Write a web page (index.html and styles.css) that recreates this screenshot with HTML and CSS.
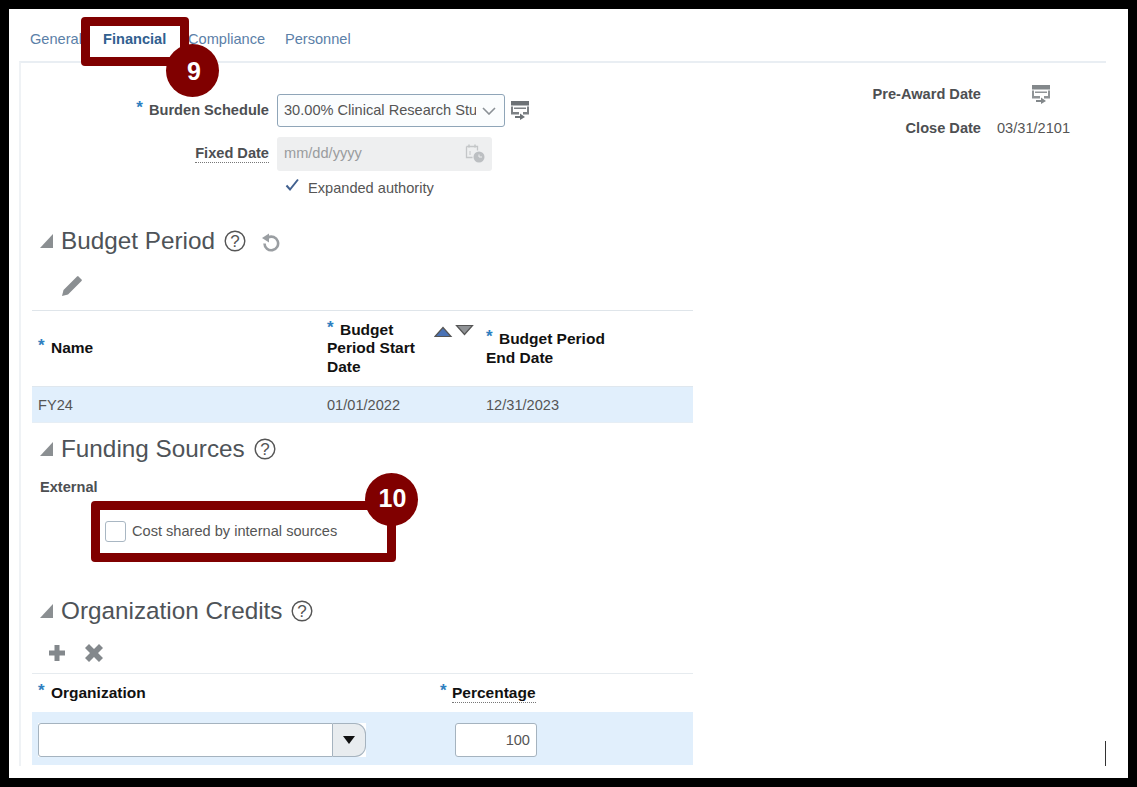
FILE: index.html
```html
<!DOCTYPE html>
<html lang="en">
<head>
<meta charset="utf-8">
<title>Award Financial</title>
<link rel="stylesheet" href="styles.css">
</head>
<body>
<main class="sheet">
  <nav class="tabs">
    <span class="tab tab-general">General</span>
    <span class="tab tab-active">Financial</span>
    <span class="tab tab-compliance">Compliance</span>
    <span class="tab">Personnel</span>
  </nav>
  <div class="panel">
    <div class="top-area">
      <div class="form">
        <div class="form-row row-burden">
          <label class="form-label"><span class="req">*</span> Burden Schedule</label>
          <div class="select"><span class="select-text">30.00% Clinical Research Stu</span>
            <svg class="chev" width="14" height="8" viewBox="0 0 14 8"><path d="M1 1l6 6 6-6" fill="none" stroke="#8b9196" stroke-width="1.6"/></svg>
          </div>
          <svg class="feedback" width="18" height="19" viewBox="0 0 18 19"><path d="M0 0h18v4.500H0z" fill="#6d7276"/><path d="M0 5.500h2V11h6v2.500H0zM16 5.500h2v8h-6V11h4zM3 6.500h12V8H3z" fill="#7d8185"/><path d="M4 15h5v-2.500l5 3.500-5 3v-2H4z" fill="#6d7276"/></svg>
        </div>
        <div class="form-row row-fixed">
          <label class="form-label"><span class="dotted">Fixed Date</span></label>
          <div class="date-input"><span>mm/dd/yyyy</span>
            <svg width="22" height="22" viewBox="0 0 22 22"><path d="M2.500 4.500h11v4M2.500 4.500v11h6" fill="none" stroke="#c4c6c8" stroke-width="1.300"/><path d="M5 2.500v3M11 2.500v3" stroke="#c4c6c8" stroke-width="1.500"/><path d="M6 9v4" stroke="#c4c6c8"/><circle cx="15" cy="15" r="5.500" fill="#bcbfc2"/><path d="M15 12.500V15h3" fill="none" stroke="#eeeff0"/></svg>
          </div>
        </div>
        <div class="check-row">
          <svg class="check" width="15" height="14" viewBox="0 0 15 14"><path d="M1.500 7.500l3.500 4 8-10" fill="none" stroke="#41608f" stroke-width="2"/></svg>
          <span>Expanded authority</span>
        </div>
      </div>
      <dl class="dates">
        <div class="date-row"><dt>Pre-Award Date</dt><dd>
          <svg class="feedback" width="18" height="19" viewBox="0 0 18 19"><path d="M0 0h18v4.500H0z" fill="#83888b"/><path d="M0 5.500h2V11h6v2.500H0zM16 5.500h2v8h-6V11h4zM3 6.500h12V8H3z" fill="#909497"/><path d="M4 15h5v-2.500l5 3.500-5 3v-2H4z" fill="#83888b"/></svg>
        </dd></div>
        <div class="date-row"><dt>Close Date</dt><dd>03/31/2101</dd></div>
      </dl>
    </div>

    <section class="section">
      <header class="sec-head">
        <span class="tri"></span><h2>Budget Period</h2>
        <svg class="help" width="22" height="22" viewBox="0 0 22 22"><circle cx="11" cy="11" r="9.800" fill="none" stroke="#555" stroke-width="1.400"/><text x="11" y="17" text-anchor="middle" class="help-q">?</text></svg>
        <svg class="refresh" width="20" height="20" viewBox="0 0 20 20"><path d="M7 5.500A6.800 6.800 0 1 1 3.500 11.500" fill="none" stroke="#9a9ea2" stroke-width="2.600"/><path d="M1 6l7-4.500v9z" fill="#9a9ea2"/></svg>
      </header>
      <div class="toolbar tb-budget">
        <svg width="22" height="22" viewBox="0 0 22 22"><path d="M1 21l1.500-6L14.500 3l4.500 4.500-12 12zM16 1.500l1-.5 4 4-.5 1-1.500 1.500L14.500 3z" fill="#8b8f92"/></svg>
      </div>
      <div class="grid grid-budget head-budget">
        <div class="th th-name th-name-budget"><span class="req">*</span> Name</div>
        <div class="th th-start"><span class="th-wrap"><span class="req">*</span> Budget<br>Period Start<br>Date</span>
          <svg class="sort" width="40" height="14" viewBox="0 0 40 14"><path d="M1 12.500L9 3.500l8 9z" fill="#4a72b5" stroke="#555" stroke-width="1.200"/><path d="M22.500 1.500h16l-8 9z" fill="#8f9295" stroke="#555" stroke-width="1.200"/></svg>
        </div>
        <div class="th th-end"><span class="req">*</span> Budget Period<br>End Date</div>
      </div>
      <div class="grid grid-budget row-budget">
        <div class="td td-name">FY24</div><div class="td">01/01/2022</div><div class="td">12/31/2023</div>
      </div>
    </section>

    <section class="section">
      <header class="sec-head head-funding">
        <span class="tri"></span><h2>Funding Sources</h2>
        <svg class="help" width="22" height="22" viewBox="0 0 22 22"><circle cx="11" cy="11" r="9.800" fill="none" stroke="#555" stroke-width="1.400"/><text x="11" y="17" text-anchor="middle" class="help-q">?</text></svg>
      </header>
      <div class="external">External</div>
      <div class="cost-row"><span class="box"></span><span>Cost shared by internal sources</span></div>
    </section>

    <section class="section">
      <header class="sec-head head-org">
        <span class="tri"></span><h2>Organization Credits</h2>
        <svg class="help" width="22" height="22" viewBox="0 0 22 22"><circle cx="11" cy="11" r="9.800" fill="none" stroke="#555" stroke-width="1.400"/><text x="11" y="17" text-anchor="middle" class="help-q">?</text></svg>
      </header>
      <div class="toolbar tb-org">
        <svg width="18" height="18" viewBox="0 0 18 18"><path d="M6.500 1h5v5.500H17v5h-5.500V17h-5v-5.500H1v-5h5.500z" fill="#83888c"/></svg>
        <svg width="20" height="20" viewBox="0 0 20 20"><path d="M5 1L10 6l5-5 4 4-5 5 5 5-4 4-5-5-5 5-4-4 5-5-5-5z" fill="#83888c"/></svg>
      </div>
      <div class="grid grid-org head-orgtable">
        <div class="th th-name"><span class="req">*</span> Organization</div>
        <div class="th"><span class="req req-tight">*</span> <span class="dotted">Percentage</span></div>
      </div>
      <div class="grid grid-org row-org">
        <div class="combo"><span class="combo-input"></span><span class="combo-btn"><svg width="12" height="8" viewBox="0 0 12 8"><path d="M0 0h12L6 8z" fill="#111"/></svg></span></div>
        <div class="num-wrap"><span class="num">100</span></div>
      </div>
    </section>
  </div>

  <span class="caret"></span>
  <div class="callout callout-9"></div>
  <div class="badge badge-9">9</div>
  <div class="callout callout-10"></div>
  <div class="badge badge-10">10</div>
</main>
</body>
</html>
```
FILE: styles.css
```css
* { box-sizing: border-box; }
html, body { margin: 0; padding: 0; }
body {
  width: 1137px;
  height: 787px;
  background: #000;
  padding: 9px;
  font-family: "Liberation Sans", Arial, sans-serif;
  font-size: 14.6px;
  color: #555;
  overflow: hidden;
}
.sheet {
  position: relative;
  width: 1119px;
  height: 769px;
  background: #fff;
}
.tabs {
  display: flex;
  align-items: center;
  height: 52px;
  padding: 8px 0 0 21px;
  color: #5b80a8;
}
.tab-general { width: 73px; }
.tab-active { width: 85px; font-weight: 700; color: #31608f; }
.tab-compliance { width: 97px; }
.panel {
  width: 1087px;
  height: 705px;
  margin-left: 10px;
  border-top: 2px solid #e9eef3;
  border-left: 2px solid #eff2f5;
  padding-left: 11px;
}
.top-area {
  display: flex;
  height: 162px;
  padding-top: 31px;
}
.form { width: 802px; flex: none; }
.form-row { display: flex; align-items: center; }
.row-burden { height: 33px; }
.row-fixed { height: 34px; margin-top: 10px; }
.form-label {
  flex: none;
  width: 237px;
  margin-right: 8px;
  padding-bottom: 2px;
  text-align: right;
  font-weight: 700;
  color: #4d4f52;
}
.dotted { border-bottom: 1px dotted #777; padding-bottom: 1px; }
.req {
  position: relative;
  top: -2px;
  margin-right: 2px;
  color: #2f7fc0;
  font-size: 17px;
  font-weight: 700;
  line-height: 0;
}
.req-tight { margin-right: 1px; }
.select {
  display: flex;
  align-items: center;
  flex: none;
  width: 228px;
  height: 33px;
  padding: 0 7px 2px 6px;
  border: 1px solid #8fa5b8;
  border-radius: 3px;
  background: #fbfdfe;
  color: #555;
}
.select-text { width: 192px; overflow: hidden; white-space: nowrap; }
.chev { flex: none; margin: 2px 0 0 6px; }
.feedback { flex: none; }
.row-burden .feedback { margin-left: 6px; }
.date-input {
  display: flex;
  align-items: center;
  justify-content: space-between;
  flex: none;
  width: 215px;
  height: 34px;
  padding: 0 6px 2px 7px;
  border-radius: 3px;
  background: #eeeff0;
  color: #9a9c9e;
}
.check-row {
  display: flex;
  align-items: center;
  gap: 8px;
  height: 22px;
  margin: 6px 0 0 253px;
}
.check { margin-top: -7px; }
.dates { margin: -17px 0 0; }
.date-row { display: flex; align-items: center; height: 34px; }
.date-row dt {
  width: 147px;
  text-align: right;
  font-weight: 700;
  color: #4d4f52;
}
.date-row dd { display: flex; margin: 0 0 0 16px; }
.date-row .feedback { margin-left: 35px; }
.sec-head { display: flex; align-items: center; height: 32px; margin-left: 8px; }
.sec-head h2 {
  margin: 0 9px 0 0;
  font-size: 24.3px;
  font-weight: 400;
  color: #4e5358;
}
.tri {
  width: 0;
  height: 0;
  margin-right: 8px;
  border-style: solid;
  border-width: 0 0 14px 13px;
  border-color: transparent transparent #8b8f92 transparent;
}
.help { flex: none; }
.help-q { font-family: "Liberation Sans", Arial, sans-serif; font-size: 17px; fill: #555; }
.refresh { margin-left: 15px; margin-top: 2px; }
.toolbar { display: flex; align-items: center; }
.tb-budget { height: 53px; padding: 5px 0 0 29px; }
.grid { display: grid; width: 661px; }
.grid-budget { grid-template-columns: 295px 159px 1fr; }
.grid-org { grid-template-columns: 408px 1fr; }
.head-budget { height: 77px; border-top: 1px solid #dfe5ea; align-items: center; border-bottom: 1px solid #dfe7ee; }
.th { font-size: 15.5px; font-weight: 700; color: #111; line-height: 18px; }
.th-name { padding-left: 6px; }
.th-name-budget { padding-bottom: 2px; }
.th-start { display: flex; position: relative; }
.th-wrap { line-height: 18.500px; white-space: nowrap; }
.sort { position: absolute; top: 3px; left: 107px; }
.th-end { padding-bottom: 1px; line-height: 19px; }
.row-budget { height: 36px; align-items: center; background: #e1effc; border-bottom: 1px solid #e6eef5; }
.td-name { padding-left: 6px; }
.head-funding { margin-top: 10px; }
.external { height: 20px; margin: 12px 0 0 8px; font-weight: 700; color: #4d4f52; line-height: 20px; }
.cost-row { display: flex; align-items: center; gap: 6px; height: 22px; margin: 23px 0 0 73px; }
.box { width: 21px; height: 21px; border: 1px solid #a9b7c3; border-radius: 3px; background: #fff; }
.head-org { margin-top: 53px; }
.tb-org { height: 46px; gap: 18px; padding: 6px 0 0 16px; }
.head-orgtable { height: 39px; align-items: center; border-top: 1px solid #e6ebef; padding-bottom: 1px; }
.row-org { height: 53px; align-items: start; padding-top: 11px; background: #e1effc; }
.combo { display: flex; width: 328px; margin-left: 6px; height: 34px; background: #fff; }
.combo-input {
  width: 295px;
  border: 1px solid #a5b3bf;
  border-radius: 3px 0 0 3px;
  background: #fff;
}
.combo-btn {
  display: flex;
  align-items: center;
  justify-content: center;
  width: 33px;
  border: 1px solid #a5b3bf;
  border-left: 0;
  border-radius: 0 11px 11px 0;
  background: #e8ecef;
}
.num-wrap { padding-left: 15px; }
.num {
  display: block;
  width: 82px;
  height: 34px;
  padding-right: 6px;
  border: 1px solid #a5b3bf;
  border-radius: 3px;
  background: #fff;
  color: #555;
  line-height: 32px;
  text-align: right;
}
.caret {
  position: absolute;
  left: 1096px;
  top: 732px;
  width: 1px;
  height: 25px;
  background: #333;
}
.callout {
  position: absolute;
  border: 9px solid #800000;
  border-radius: 4px;
}
.callout-9 { left: 72px; top: 8px; width: 108px; height: 49px; }
.callout-10 { left: 82px; top: 492px; width: 305px; height: 61px; }
.badge {
  position: absolute;
  width: 53px;
  height: 53px;
  border-radius: 50%;
  background: #800000;
  color: #fff;
  font-size: 25px;
  font-weight: 700;
  text-align: center;
}
.badge-9 { left: 157px; top: 35px; padding-left: 3px; line-height: 55px; }
.badge-10 { left: 356px; top: 464px; padding-left: 2px; line-height: 50px; }
```
